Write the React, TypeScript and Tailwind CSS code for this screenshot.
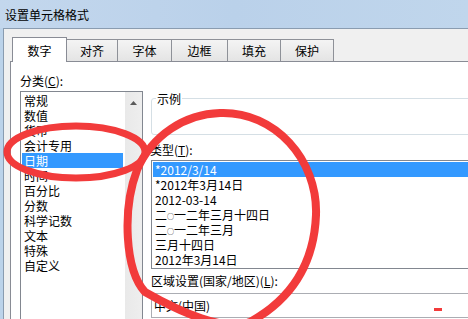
import React from "react";

const tabs = [
  { label: "数字", w: "w-[55px]", active: true },
  { label: "对齐", w: "w-[51px]", active: false },
  { label: "字体", w: "w-[54px]", active: false },
  { label: "边框", w: "w-[56px]", active: false },
  { label: "填充", w: "w-[53px]", active: false },
  { label: "保护", w: "w-[53px]", active: false },
];

const categories = ["常规", "数值", "货币", "会计专用", "日期", "时间", "百分比", "分数", "科学记数", "文本", "特殊", "自定义"];

function Ring() {
  return <span className="inline-block w-[7px] text-center text-[7px] leading-[7px] align-[1px]">○</span>;
}

const types: React.ReactNode[] = [
  "*2012/3/14",
  "*2012年3月14日",
  "2012-03-14",
  <>二<Ring />一二年三月十四日</>,
  <>二<Ring />一二年三月</>,
  "三月十四日",
  "2012年3月14日",
];

export default function App() {
  return (
    <div className="relative w-[468px] h-[319px] overflow-hidden flex flex-col bg-[#bcd3ea] text-[12px] leading-[15px] text-black font-['Noto_Sans_CJK_SC','Noto_Sans',sans-serif]">
      {/* title bar */}
      <div className="h-[28px] shrink-0 flex items-center pl-[5px] bg-gradient-to-r from-[#c3d7ed] via-[#bad1ea] to-[#c0d6ec] text-[12px] text-black">
        设置单元格格式
      </div>
      {/* client area */}
      <div className="flex-1 ml-[3px] border-t border-l border-[#8a9cb0] bg-[#f0f0f0] pt-[8px] pl-[6px] flex flex-col">
        {/* tabs */}
        <div className="flex items-end h-[24px] pl-[2px]">
          {tabs.map((t) =>
            t.active ? (
              <div
                key={t.label}
                className={`${t.w} h-[25px] -mb-px relative z-10 bg-white border border-b-0 border-[#898c95] flex items-center justify-center`}
              >
                {t.label}
              </div>
            ) : (
              <div
                key={t.label}
                className={`${t.w} h-[22px] bg-gradient-to-b from-[#f4f4f4] to-[#e4e4e4] border-t border-r border-[#8e9198] flex items-center justify-center`}
              >
                {t.label}
              </div>
            )
          )}
        </div>
        {/* panel */}
        <div className="w-[560px] flex-1 bg-white border-t border-l border-[#898c95] flex">
          {/* left column */}
          <div className="ml-[9px] pt-[11px] flex flex-col">
            <div className="h-[15px]">
              分类(<span className="underline">C</span>):
            </div>
            <div className="mt-[3px] w-[123px] h-[240px] border border-[#828790] flex">
              <div className="w-[102px] pt-px pl-px">
                {categories.map((c) => (
                  <div
                    key={c}
                    className={`h-[15px] pl-[2px] ${c === "日期" ? "bg-[#3399ff] text-white" : ""}`}
                  >
                    {c}
                  </div>
                ))}
              </div>
              <div className="ml-[2px] w-[17px] bg-gradient-to-r from-[#e9e9e9] to-[#eeeeee] flex justify-center pt-[9px]">
                <svg width="7" height="4" viewBox="0 0 7 4">
                  <polygon points="3.5,0 7,4 0,4" fill="#5a5a5a" />
                </svg>
              </div>
            </div>
          </div>
          {/* right column */}
          <div className="ml-[7px] flex flex-col">
            <fieldset className="mt-[29px] ml-[1px] h-[44px] border border-[#d5dfe5] rounded-[3px] w-[400px]">
              <legend className="ml-[4px] px-px leading-[15px]">示例</legend>
            </fieldset>
            <div className="mt-[7px] h-[15px]">
              类型(<span className="underline">T</span>):
            </div>
            <div className="mt-[3px] ml-[1px] w-[400px] h-[109px] border border-[#828790] pt-px pl-px">
              {types.map((t, i) => (
                <div key={i} className={`h-[15px] pl-[2px] ${i === 0 ? "bg-[#3399ff] text-white" : ""}`}>
                  {t}
                </div>
              ))}
            </div>
            <div className="mt-[4px] ml-[1px] h-[15px]">
              区域设置(国家/地区)(<span className="underline">L</span>):
            </div>
            <div className="mt-[5px] ml-[1px] w-[400px] h-[25px] border border-[#abadb3] flex items-center pl-[2px]">
              中文(中国)
            </div>
          </div>
        </div>
      </div>
      {/* red annotations */}
      <svg className="absolute inset-0 pointer-events-none" width="468" height="319" viewBox="0 0 468 319">
        <ellipse cx="76" cy="152" rx="69" ry="26" fill="none" stroke="#f23b3b" strokeWidth="7" />
        <path
          d="M 220 113 C 275 111, 318 160, 316 215 C 314 265, 290 300, 250 322 C 225 332, 180 312, 145 292 C 125 270, 122 210, 137 170 C 152 135, 185 114, 220 113 Z"
          fill="none"
          stroke="#f23b3b"
          strokeWidth="8"
        />
        <rect x="434" y="308" width="8" height="3" fill="#f23b3b" />
      </svg>
    </div>
  );
}
